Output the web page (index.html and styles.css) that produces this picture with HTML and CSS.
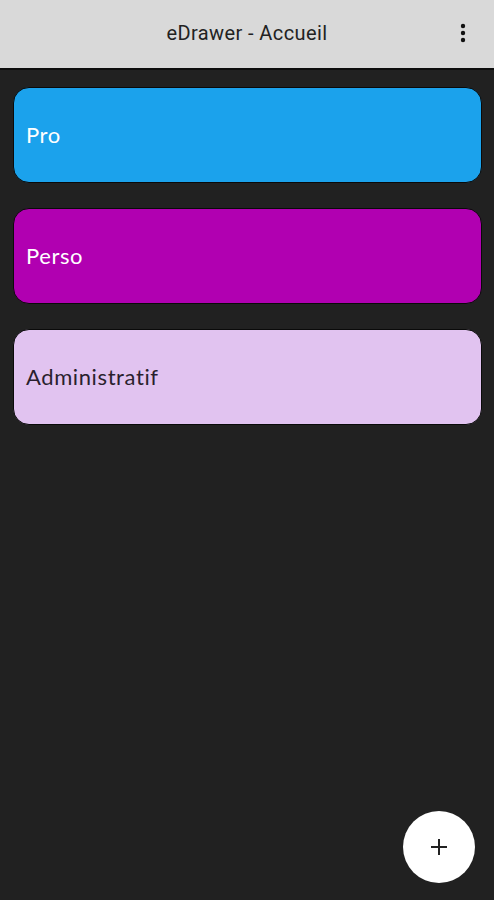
FILE: index.html
```html
<!DOCTYPE html>
<html lang="fr">
  <head>
    <meta charset="UTF-8" />
    <meta name="viewport" content="width=device-width, initial-scale=1.0" />
    <title>eDrawer - Accueil</title>
    <link rel="stylesheet" href="styles.css">
  </head>
  <body>
    <header class="topBar">
      <h1>eDrawer - Accueil</h1>
      <button class="menuBtn" aria-label="Menu">
        <svg width="6" height="20" viewBox="0 0 6 20">
          <circle cx="3" cy="3" r="2.2" fill="#111" />
          <circle cx="3" cy="10" r="2.2" fill="#111" />
          <circle cx="3" cy="17" r="2.2" fill="#111" />
        </svg>
      </button>
    </header>
    <main class="drawers">
      <div class="drawer pro">Pro</div>
      <div class="drawer perso">Perso</div>
      <div class="drawer admin">Administratif</div>
    </main>
    <button class="fab" aria-label="Ajouter">
      <svg width="20" height="20" viewBox="0 0 20 20">
        <path d="M10 2v16M2 10h16" stroke="#222" stroke-width="2" />
      </svg>
    </button>
  </body>
</html>
```

FILE: styles.css
```css
* {
  margin: 0;
  padding: 0;
  box-sizing: border-box;
}

body {
  background-color: #212121;
  font-family: Roboto, "Noto Sans", sans-serif;
  height: 900px;
  overflow: hidden;
}

.topBar {
  height: 70px;
  background-color: #d9d9d9;
  border-bottom: 2px solid #0e0e0e;
  display: flex;
  align-items: center;
  justify-content: center;
  position: relative;
}

.topBar h1 {
  font-size: 20px;
  font-weight: 400;
  letter-spacing: 0.4px;
  color: #222;
  margin-top: -3px;
}

.menuBtn {
  position: absolute;
  right: 28px;
  top: 23px;
  border: none;
  background: none;
  display: flex;
}

.drawers {
  display: flex;
  flex-direction: column;
  gap: 25px;
  padding: 17px 12px 0 13px;
}

.drawer {
  height: 96px;
  border-radius: 16px;
  display: flex;
  align-items: center;
  padding-left: 12px;
  font-family: Lato, "Open Sans", sans-serif;
  font-size: 22px;
  letter-spacing: 0.6px;
  color: #fff;
  border: 1px solid #0a0a0a;
  padding-bottom: 2px;
}

.pro {
  background-color: #1ba2ec;
}

.perso {
  background-color: #b100b1;
}

.admin {
  background-color: #e1c3f0;
  color: #2a1f2e;
}

.fab {
  position: absolute;
  left: 403px;
  top: 811px;
  width: 72px;
  height: 72px;
  border-radius: 50%;
  border: none;
  background-color: #fff;
  display: flex;
  align-items: center;
  justify-content: center;
}
```
